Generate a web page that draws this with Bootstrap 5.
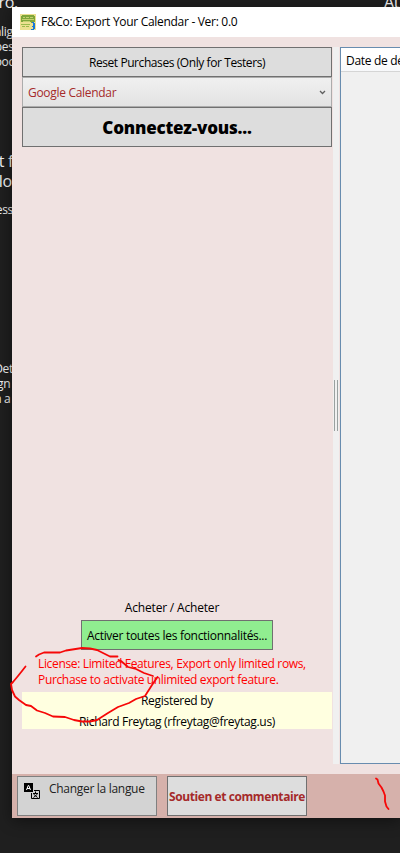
<!DOCTYPE html>
<html lang="fr">
<head>
<meta charset="utf-8">
<meta name="viewport" content="width=device-width, initial-scale=1">
<title>F&amp;Co: Export Your Calendar</title>
<link href="https://cdn.jsdelivr.net/npm/bootstrap@5.3.0/dist/css/bootstrap.min.css" rel="stylesheet">
<style>
body{width:400px;height:853px;background:#1f1f1f;font-family:"Open Sans","Noto Sans",sans-serif;font-size:12px;line-height:16px;letter-spacing:-.3px;color:#000}
.desk-text{position:absolute;right:388px;color:#f2f2f2;white-space:pre;line-height:15px}
.desk-lg{font-size:16px;line-height:20px}
.desk-top{right:auto;left:384px;top:-8px}
.app-window{position:absolute;left:12px;top:7px;width:388px;height:811px;background:#f0e2e1;box-shadow:0 3px 14px rgba(0,0,0,.45)}
.title-bar{height:30px;padding-left:8px;gap:5px}
.work-area{height:737px;padding:10px 0 10px 10px}
.side-pane{width:310px;margin-right:1px}
.flat-btn{border:1px solid #707070;border-radius:0;background:#ddd;color:#000;font-size:inherit;line-height:16px;letter-spacing:inherit;padding:0;height:30px;white-space:nowrap}
.reset{letter-spacing:-.42px;padding-top:2px}
.service{height:30px;border:1px solid #acacac;background:linear-gradient(#f0f0f0,#e3e3e3);color:#a52a2a;padding:0 5px}
.service span{padding-top:2px}
.connect{height:40px;font-size:17px;font-weight:800;letter-spacing:-.2px;padding-top:2px}
.buy{padding-right:10px;letter-spacing:-.18px}
.activate{width:192px;background:#90ee90;padding-top:1px}
.license{color:#f00;padding-left:16px;margin-top:6px;white-space:nowrap}
.license .l1{letter-spacing:-.35px}
.license .l2{letter-spacing:-.34px}
.owner{background:#ffffe0;height:37px;margin-top:4px;padding-top:1px;margin-bottom:35px}
.owner div+div{margin-top:5px}
.splitter{width:6px;background:#f0f0f0;margin-right:1px}
.grip{width:4px;height:51px;border:solid #9aa09f;border-width:0 1px}
.event-list{border:1px solid #688caf;border-right:0;background:#f0f0f0}
.list-head{height:24px;background:linear-gradient(#fff 40%,#f7f8fa);border-bottom:1px solid #d5d5d5;padding:2px 0 0 5px;white-space:nowrap}
.foot-bar{height:44px;background:#d6b1ab;padding:2px 5px;gap:10px}
.foot-bar .flat-btn{width:140px;height:40px}
.lang{background:#d3d3d3;border-color:#808080;color:#222}
.lang-text{margin-left:7px}
.foot-bar .support{color:#a52a2a;font-weight:700;letter-spacing:-.42px;padding-top:2px}
.ink{position:absolute;left:0;top:0;pointer-events:none}
</style>
<script src="https://cdn.jsdelivr.net/npm/bootstrap@5.3.0/dist/js/bootstrap.bundle.min.js" defer></script>
</head>
<body class="position-relative overflow-hidden m-0">
<div class="desk-text desk-lg" style="top:-8px;right:382px">ro.</div>
<div class="desk-text desk-lg desk-top">At</div>
<div class="desk-text" style="top:24px;right:386px">alig
pes
ooc</div>
<div class="desk-text desk-lg" style="top:151px;right:387px">t f
lo</div>
<div class="desk-text" style="top:202px;right:387px">ess</div>
<div class="desk-text" style="top:361px;right:387px">Det
 gn
n a</div>

<main class="app-window d-flex flex-column overflow-visible">
  <header class="title-bar bg-white d-flex align-items-center flex-shrink-0">
    <svg width="16" height="16" viewBox="0 0 16 16" shape-rendering="crispEdges">
      <path fill="#ece090" d="M0 0h16v16H0z"/>
      <path fill="#7fa63a" d="M2 1h12v1h1v6h-1v1h-3V8H1V2h1z"/>
      <path fill="#c4d070" d="M3 3h2v1H3zM6 3h3v1H6zM10 3h3v1h-3zM2 5h12v1H2zM3 7h7v1H3z"/>
      <path fill="#9cba4c" d="M1 10h9v1H1zM2 12h3v1H2zM6 12h3v1H6z"/>
      <path fill="#1878d8" d="M12 8h2v1h1v6h-1v1h-3v-1h2v-2h-1v-1h1V9h-1z"/>
    </svg>
    <span class="title-text">F&amp;Co: Export Your Calendar - Ver: 0.0</span>
  </header>
  <section class="work-area d-flex flex-shrink-0">
    <div class="side-pane d-flex flex-column flex-shrink-0">
      <button class="btn flat-btn reset">Reset Purchases (Only for Testers)</button>
      <div class="service d-flex align-items-center justify-content-between">
        <span>Google Calendar</span>
        <svg width="7" height="5" viewBox="0 0 7 5" fill="none" stroke="#606060" stroke-width="1.3"><path d="M1 1l2.500 2.500L6 1"/></svg>
      </div>
      <button class="btn flat-btn connect">Connectez-vous...</button>
      <div class="mt-auto text-center buy">Acheter / Acheter</div>
      <button class="btn flat-btn activate align-self-center mt-1">Activer toutes les fonctionnalités...</button>
      <div class="license"><div class="l1">License: Limited Features, Export only limited rows,</div><div class="l2">Purchase to activate unlimited export feature.</div></div>
      <div class="owner text-center"><div>Registered by</div><div>Richard Freytag (rfreytag@freytag.us)</div></div>
    </div>
    <div class="splitter d-flex align-items-center justify-content-center flex-shrink-0"><div class="grip"></div></div>
    <div class="event-list flex-fill overflow-hidden"><div class="list-head d-flex align-items-center">Date de début</div></div>
  </section>
  <footer class="foot-bar d-flex flex-shrink-0">
    <button class="btn flat-btn lang d-flex align-items-start">
      <svg class="ms-1 mt-1" width="20" height="20" viewBox="0 0 20 20">
        <path d="M2 2h9v9H2z"/>
        <path d="M4.500 9l1.700-4.500h.6L8.500 9M5 7.500h3" fill="none" stroke="#fff"/>
        <path d="M12 9.500h5.500v8h-8V12" fill="none" stroke="#000"/>
        <path d="M13.500 10.500v2M11 12.500h5M11.500 13l4 3.500M15.500 13l-4 3.500" fill="none" stroke="#000"/>
      </svg>
      <span class="lang-text mt-1">Changer la langue</span>
    </button>
    <button class="btn flat-btn support">Soutien et commentaire</button>
  </footer>
</main>
<svg class="ink" width="400" height="853" viewBox="0 0 400 853" fill="none" stroke="#f60808" stroke-width="1.8" stroke-linecap="round" stroke-linejoin="round">
  <path d="M36 656.500L39 654.500L44 652.500L60 652.500L66 650.500L82 648L90 648.500L97 650L103 653L110 656.500H117.500M118.500 660L121 661L128 667L136 669L144 673L153 676"/>
  <path d="M157.500 677L152 685L145 696L136 699L129 703L118 707L108 713L97 720L90 721.500H82L74 720L65 717L53 716.500L45 713L37 710.500L31 706L26 705L19 700L15 696.500L12 690L11 684L13 682L18 676L22 671L25.500 666.500"/>
  <path d="M376 778.500l1.500 1 1 4 3 4 2 4 1.500 4v6l1.500 5 2 2.500"/>
</svg>
</body>
</html>
